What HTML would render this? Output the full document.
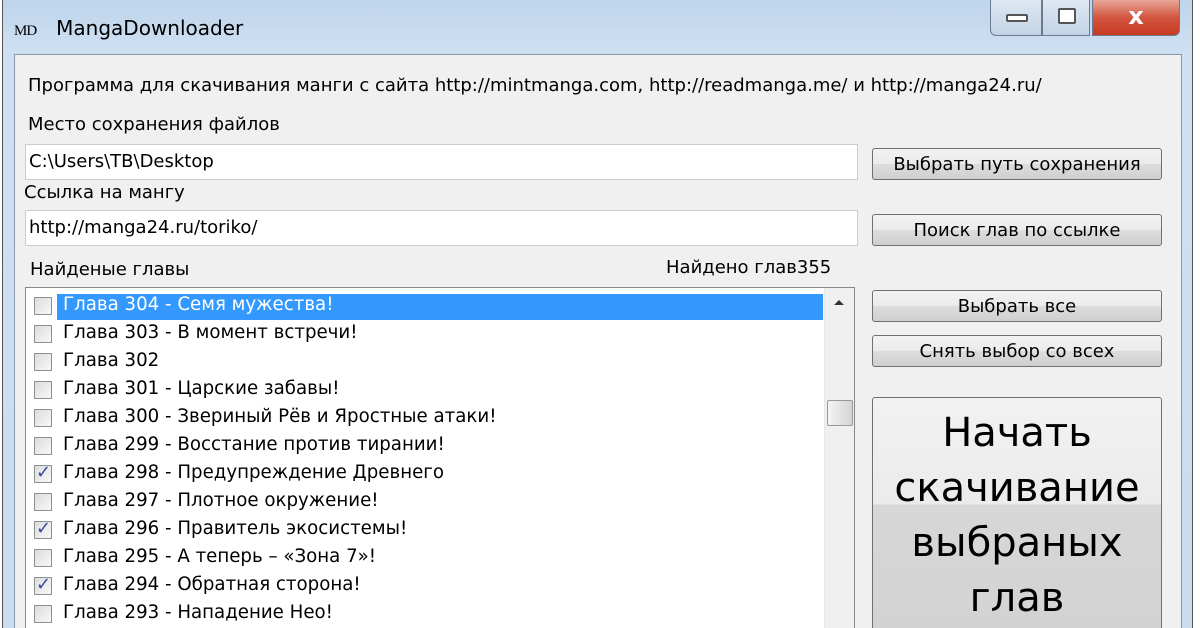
<!DOCTYPE html>
<html><head><meta charset="utf-8"><style>
*{margin:0;padding:0;box-sizing:border-box}
html,body{width:1200px;height:628px;overflow:hidden}
body{background:#fff;font-family:"DejaVu Sans","Liberation Sans",sans-serif;position:relative}
.win{position:absolute;left:2px;top:-8px;width:1191px;height:660px;border:1px solid #555;border-radius:8px;background:linear-gradient(#bcd3ea,#cfe0f2 60px,#c9dcf0)}
.title{position:absolute;left:14px;top:16px;font-size:20px;color:#000}
.title .md{font-family:"Liberation Serif",serif;font-size:15px;margin-right:20px;letter-spacing:-1px}
.cb{position:absolute;top:0;height:36px;border:1px solid #6a7b8f;border-top:none}
.client{position:absolute;left:14px;top:54px;width:1168px;height:600px;background:#f0f0f0;border:1px solid #8a97a6}
.t{position:absolute;font-size:18px;color:#000;white-space:nowrap}
.tb{position:absolute;left:25px;width:833px;height:36px;background:#fff;border:1px solid #c8cdd3;font-size:18px;padding:6px 0 0 3px;white-space:nowrap}
.btn{position:absolute;left:872px;width:290px;border:1px solid #707070;border-radius:3px;background:linear-gradient(#f2f2f2 0,#ebebeb 50%,#dddddd 50%,#cfcfcf);font-size:18px;text-align:center;color:#000;white-space:nowrap}
.list{position:absolute;left:25px;top:287px;width:830px;height:360px;background:#fff;border:1px solid #828790}
.row{position:absolute;left:0;height:28px;width:800px;font-size:18.2px;white-space:nowrap}
.row .c{position:absolute;left:8px;top:6px;width:18px;height:18px;border:1px solid #8e8f8f;background:linear-gradient(135deg,#dcdcdc,#f8f8f8)}
.row .c.k::after{content:"✓";position:absolute;left:1px;top:-4px;font-size:18px;color:#3b4a9c;font-weight:bold}
.row span{position:absolute;left:31px;top:3px;padding:0 6px;height:26px}
.row.sel span{background:#3399ff;color:#fff;width:766px}
</style></head><body>
<div class="win"></div>
<div class="title"><span class="md">MD</span>MangaDownloader</div>
<div class="cb" style="left:990px;width:52px;border-radius:0 0 0 6px;background:linear-gradient(#dfe8f3,#c3d3e6)"><div style="position:absolute;left:15px;top:14px;width:22px;height:8px;border:2px solid #555;border-radius:2px;background:#fff"></div></div>
<div class="cb" style="left:1042px;width:48px;background:linear-gradient(#dfe8f3,#c3d3e6)"><div style="position:absolute;left:15px;top:8px;width:18px;height:16px;border:2px solid #555;border-radius:2px;background:#fff"></div></div>
<div class="cb" style="left:1092px;width:88px;border-radius:0 0 6px 0;background:linear-gradient(#e8a899,#d2553f 50%,#c73a22);color:#fff;font-size:24px;font-weight:bold;text-align:center;line-height:32px">x</div>
<div class="client"></div>
<div class="t" style="left:28px;top:75px">Программа для скачивания манги с сайта http://mintmanga.com, http://readmanga.me/ и http://manga24.ru/</div>
<div class="t" style="left:28px;top:114px">Место сохранения файлов</div>
<div class="tb" style="top:144px">C:\Users\TB\Desktop</div>
<div class="t" style="left:24px;top:182px">Ссылка на мангу</div>
<div class="tb" style="top:210px">http://manga24.ru/toriko/</div>
<div class="t" style="left:30px;top:259px">Найденые главы</div>
<div class="t" style="left:666px;top:257px">Найдено глав355</div>
<div class="btn" style="top:148px;height:32px;line-height:32px">Выбрать путь сохранения</div>
<div class="btn" style="top:214px;height:32px;line-height:32px">Поиск глав по ссылке</div>
<div class="btn" style="top:290px;height:32px;line-height:32px">Выбрать все</div>
<div class="btn" style="top:335px;height:32px;line-height:32px">Снять выбор со всех</div>
<div class="btn" style="top:397px;height:250px;font-size:40px;line-height:55px;padding-top:8px;background:linear-gradient(#f2f2f2 0,#ebebeb 43%,#d7d7d7 43%,#d2d2d2)">Начать<br>скачивание<br>выбраных<br>глав</div>
<div class="list">
<div class="row sel" style="top:3px"><div class="c"></div><span>Глава 304 - Семя мужества!</span></div>
<div class="row" style="top:31px"><div class="c"></div><span>Глава 303 - В момент встречи!</span></div>
<div class="row" style="top:59px"><div class="c"></div><span>Глава 302</span></div>
<div class="row" style="top:87px"><div class="c"></div><span>Глава 301 - Царские забавы!</span></div>
<div class="row" style="top:115px"><div class="c"></div><span>Глава 300 - Звериный Рёв и Яростные атаки!</span></div>
<div class="row" style="top:143px"><div class="c"></div><span>Глава 299 - Восстание против тирании!</span></div>
<div class="row" style="top:171px"><div class="c k"></div><span>Глава 298 - Предупреждение Древнего</span></div>
<div class="row" style="top:199px"><div class="c"></div><span>Глава 297 - Плотное окружение!</span></div>
<div class="row" style="top:227px"><div class="c k"></div><span>Глава 296 - Правитель экосистемы!</span></div>
<div class="row" style="top:255px"><div class="c"></div><span>Глава 295 - А теперь – «Зона 7»!</span></div>
<div class="row" style="top:283px"><div class="c k"></div><span>Глава 294 - Обратная сторона!</span></div>
<div class="row" style="top:311px"><div class="c"></div><span>Глава 293 - Нападение Нео!</span></div>
<div style="position:absolute;left:798px;top:0;width:30px;height:358px;background:#f0f0f0;border-left:1px solid #e6e6e6">
<div style="position:absolute;left:9px;top:12px;width:0;height:0;border-left:5px solid transparent;border-right:5px solid transparent;border-bottom:5px solid #333"></div>
<div style="position:absolute;left:2px;top:112px;width:26px;height:26px;border:1px solid #999;border-radius:2px;background:linear-gradient(90deg,#f4f4f4,#d4d4d4)"></div>
</div>
</div>
</body></html>
